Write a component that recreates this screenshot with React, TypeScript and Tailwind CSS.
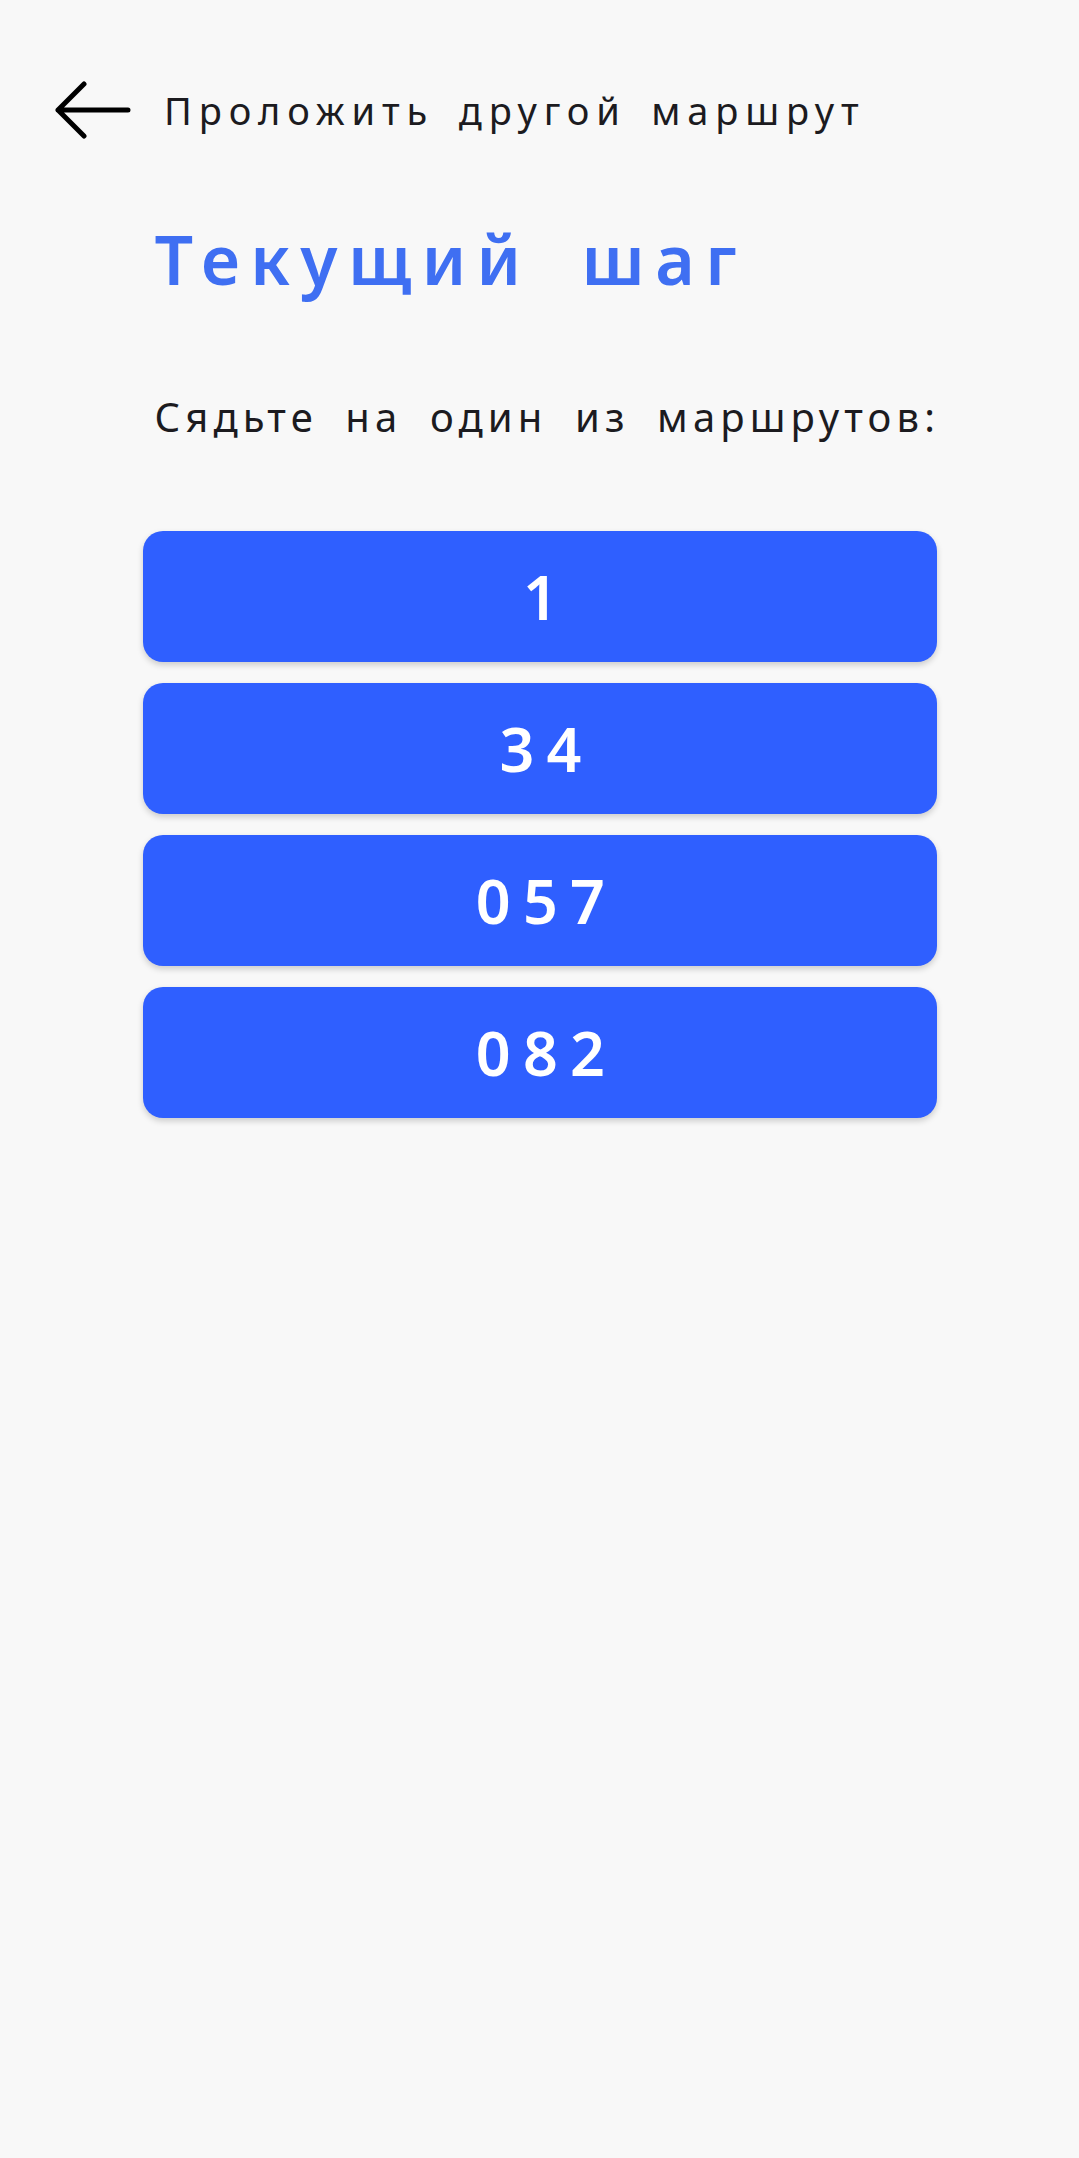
const routes = ["1", "34", "057", "082"];

const BackArrow = () => (
  <svg width="76" height="58" viewBox="0 0 76 58" fill="none" className="shrink-0">
    <path
      d="M29 3 L3 29 L29 55 M3 29 L73 29"
      stroke="#000"
      strokeWidth="5"
      strokeLinecap="round"
      strokeLinejoin="round"
    />
  </svg>
);

const App = () => {
  return (
    <div
      className="min-h-[2158px] w-full bg-[#f8f8f8] text-[#1c1b1f]"
      style={{ fontFamily: '"Noto Sans", "Open Sans", sans-serif' }}
    >
      {/* header */}
      <div className="flex items-center pt-[81px] pl-[55px]">
        <BackArrow />
        <span className="ml-[33px] whitespace-nowrap text-[38px] leading-none tracking-[0.18em] [word-spacing:8px]">
          Проложить другой маршрут
        </span>
      </div>

      <div className="mx-auto w-[794px]">
        <h1 className="mt-[86px] pl-[12px] whitespace-nowrap text-[68px] leading-none font-semibold text-[#3f6ff2] tracking-[0.153em] [word-spacing:22px]">
          Текущий шаг
        </h1>

        <p className="mt-[104px] pl-[12px] whitespace-nowrap text-[40px] leading-none tracking-[0.128em] [word-spacing:12px]">
          Сядьте на один из маршрутов:
        </p>

        <div className="mt-[94px] flex flex-col gap-[21px]">
          {routes.map((r) => (
            <button
              key={r}
              type="button"
              className="h-[131px] w-full rounded-[20px] bg-[#2f5fff] pl-[14px] text-white text-[61px] font-semibold leading-none tracking-[0.2em] shadow-[0_3px_6px_rgba(0,0,0,0.18)]"
            >
              {r}
            </button>
          ))}
        </div>
      </div>
    </div>
  );
};

export default App;
